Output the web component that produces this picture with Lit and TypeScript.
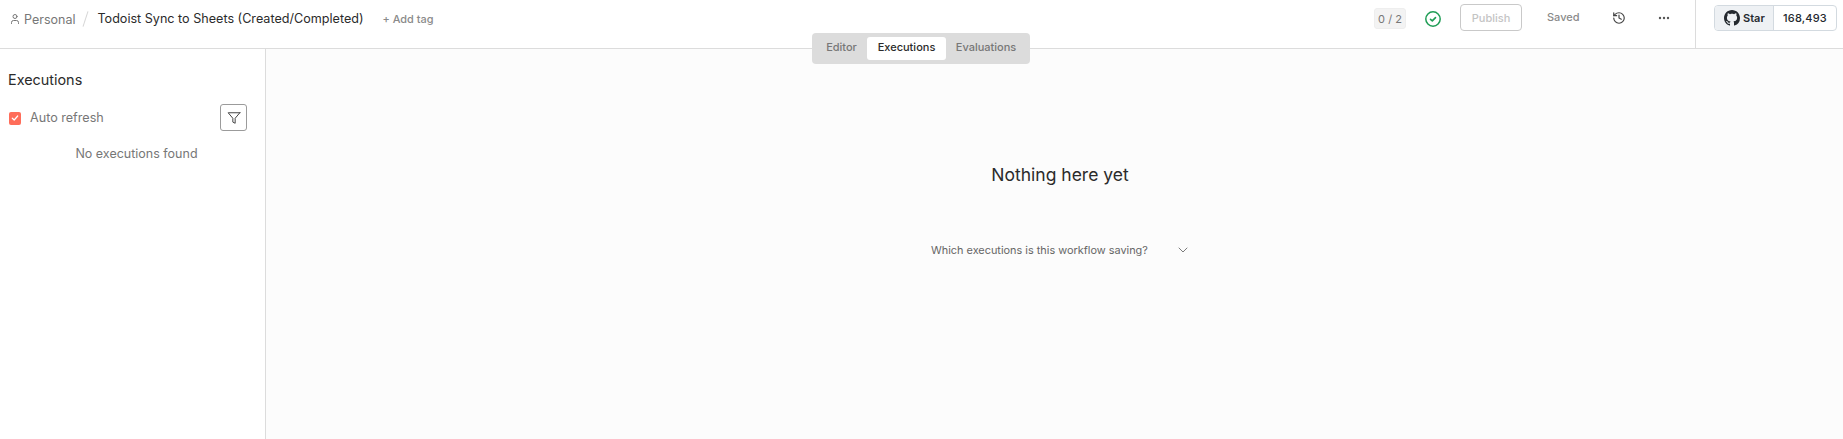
import { LitElement, html, css } from "lit";
import { customElement } from "lit/decorators.js";

@customElement("app-root")
export class AppRoot extends LitElement {
  static styles = css`
    :host { display: flex; flex-direction: column; width: 1843px; height: 439px; overflow: hidden; position: relative; background: #fff; font-family: Inter, "Liberation Sans", sans-serif; color: #222; }
    svg { display: block; flex: none; }
    .header { height: 48px; flex: none; border-bottom: 1px solid #dcdcdc; display: flex; background: #fff; }
    .crumbs { display: flex; align-items: center; height: 37px; flex: 1; padding-left: 9px; }
    .project { display: flex; align-items: center; gap: 3px; font-size: 12.5px; color: #777; margin-top: 1px; }
    .slash { width: 1px; height: 16px; background: #d6d6d6; transform: rotate(18deg); margin: 0 11px 0 10px; }
    .name { font-size: 12.6px; color: #2b2b2b; margin-top: -1px; }
    .addtag { font-size: 10.9px; font-weight: 500; color: #8a8a8a; margin-left: 19px; }
    .actions { display: flex; align-items: center; height: 36px; }
    .count { width: 32px; height: 21px; margin-top: 1px; border-radius: 3px; background: #f3f3f3; border: 1px solid #eee; box-sizing: border-box; display: flex; align-items: center; justify-content: center; font-size: 11px; color: #777; }
    .check { margin-left: 18px; margin-right: 18px; margin-top: 1px; }
    .publish { width: 62px; height: 27px; box-sizing: border-box; border: 1px solid #c9c9c9; border-radius: 4px; display: flex; align-items: center; justify-content: center; font-size: 11px; font-weight: 500; color: #c4c4c4; margin-top: -1px; }
    .saved { font-size: 11px; font-weight: 500; color: #8a8a8a; margin-left: 25px; margin-top: -2px; width: 32px; }
    .hist { margin-left: 33px; margin-top: -1px; }
    .dots { margin-left: 31px; margin-top: -1px; }
    .gh-area { width: 148px; height: 48px; flex: none; border-left: 1px solid #dcdcdc; box-sizing: border-box; padding: 5px 0 0 18px; margin-left: 24px; }
    .gh { display: flex; width: 123px; height: 26px; box-sizing: border-box; border: 1px solid #d3dae0; border-radius: 4px; font-size: 11px; font-weight: 600; color: #24292f; }
    .gh-star { width: 59px; display: flex; align-items: center; gap: 3px; padding-left: 9px; box-sizing: border-box; background: #eef1f4; border-right: 1px solid #d3dae0; border-radius: 3px 0 0 3px; }
    .gh-count { flex: 1; display: flex; align-items: center; justify-content: center; font-weight: 500; letter-spacing: .2px; }
    .tabs { position: absolute; left: 812px; top: 33px; height: 31px; width: 218px; box-sizing: border-box; background: #dcdcdc; border-radius: 4px; display: flex; align-items: center; padding: 0 4px; font-size: 11px; font-weight: 500; color: #777; z-index: 2; }
    .tab { height: 23px; display: flex; align-items: center; justify-content: center; border-radius: 3px; padding-bottom: 3px; box-sizing: border-box; }
    .tab.e1 { width: 51px; }
    .tab.e2 { width: 79px; background: #fff; color: #2b2b2b; }
    .tab.e3 { width: 80px; }
    .body { flex: 1; display: flex; min-height: 0; }
    .side { width: 266px; flex: none; box-sizing: border-box; border-right: 1px solid #dcdcdc; background: #fff; padding: 21px 18px 0 9px; }
    .side h2 { margin: 0; font-size: 14.4px; font-weight: 400; line-height: 20px; color: #2b2b2b; margin-left: -1px; }
    .refresh { display: flex; align-items: center; margin-top: 14px; height: 27px; }
    .cb { width: 12px; height: 13px; margin-top: 1px; border-radius: 2px; background: #ff6d5a; display: flex; align-items: center; justify-content: center; }
    .refresh span { margin-left: 9px; font-size: 12.6px; color: #777; flex: 1; }
    .filter { width: 27px; height: 27px; box-sizing: border-box; border: 1px solid #9b9b9b; border-radius: 3px; display: flex; align-items: center; justify-content: center; }
    .none { margin-top: 13px; margin-left: -1px; margin-right: -18px; text-align: center; font-size: 12.5px; line-height: 20px; color: #777; }
    .main { flex: 1; background: #fcfcfc; display: flex; flex-direction: column; align-items: center; padding-top: 112px; padding-left: 11px; }
    .main h1 { margin: 0; font-size: 17.5px; font-weight: 400; line-height: 28px; color: #2b2b2b; }
    .which { margin-top: 53px; display: flex; align-items: center; width: 258px; justify-content: space-between; font-size: 10.9px; color: #666; }
    .chev { margin-right: -2px; }
  `;

  render() {
    return html`
      <div class="header">
        <div class="crumbs">
          <div class="project">
            <svg width="12" height="12" viewBox="0 0 24 24" fill="none" stroke="#777" stroke-width="2" stroke-linecap="round" stroke-linejoin="round"><path d="M19 21v-2a4 4 0 0 0-4-4H9a4 4 0 0 0-4 4v2"/><circle cx="12" cy="7" r="4"/></svg>
            Personal
          </div>
          <div class="slash"></div>
          <div class="name">Todoist Sync to Sheets (Created/Completed)</div>
          <div class="addtag">+ Add tag</div>
        </div>
        <div class="actions">
          <div class="count">0 / 2</div>
          <svg class="check" width="18" height="18" viewBox="0 0 18 18" fill="none" stroke="#1f9d55" stroke-linecap="round" stroke-linejoin="round"><circle cx="9" cy="9" r="7.2" stroke-width="1.5"/><path d="M6.5 9.3 8.3 10.9 11.5 7.6" stroke-width="1.6"/></svg>
          <div class="publish">Publish</div>
          <div class="saved">Saved</div>
          <svg class="hist" width="14" height="14" viewBox="0 0 24 24" fill="none" stroke="#444" stroke-width="2" stroke-linecap="round" stroke-linejoin="round"><path d="M3 12a9 9 0 1 0 9-9 9.75 9.75 0 0 0-6.74 2.74L3 8"/><path d="M3 3v5h5"/><path d="M12 7v5l4 2"/></svg>
          <svg class="dots" width="14" height="14" viewBox="0 0 14 14" fill="#555"><circle cx="3" cy="7" r="1.2"/><circle cx="7" cy="7" r="1.2"/><circle cx="11" cy="7" r="1.2"/></svg>
        </div>
        <div class="gh-area">
          <div class="gh">
            <div class="gh-star">
              <svg width="16" height="16" viewBox="0 0 16 16" fill="#24292f"><path d="M8 0C3.58 0 0 3.58 0 8c0 3.54 2.29 6.53 5.47 7.59.4.07.55-.17.55-.38 0-.19-.01-.82-.01-1.49-2.01.37-2.53-.49-2.69-.94-.09-.23-.48-.94-.82-1.13-.28-.15-.68-.52-.01-.53.63-.01 1.08.58 1.23.82.72 1.21 1.87.87 2.33.66.07-.52.28-.87.51-1.07-1.78-.2-3.64-.89-3.64-3.95 0-.87.31-1.59.82-2.15-.08-.2-.36-1.02.08-2.12 0 0 .67-.21 2.2.82.64-.18 1.32-.27 2-.27s1.36.09 2 .27c1.53-1.04 2.2-.82 2.2-.82.44 1.1.16 1.92.08 2.12.51.56.82 1.27.82 2.15 0 3.07-1.87 3.75-3.65 3.95.29.25.54.73.54 1.48 0 1.07-.01 1.93-.01 2.2 0 .21.15.46.55.38A8.01 8.01 0 0 0 16 8c0-4.42-3.58-8-8-8Z"/></svg>
              Star
            </div>
            <div class="gh-count">168,493</div>
          </div>
        </div>
      </div>
      <div class="tabs">
        <div class="tab e1">Editor</div>
        <div class="tab e2">Executions</div>
        <div class="tab e3">Evaluations</div>
      </div>
      <div class="body">
        <div class="side">
          <h2>Executions</h2>
          <div class="refresh">
            <div class="cb"><svg width="8" height="8" viewBox="0 0 8 8" fill="none" stroke="#fff" stroke-width="1.2" stroke-linecap="round" stroke-linejoin="round"><path d="M1.3 4.2 3.2 6 6.7 2"/></svg></div>
            <span>Auto refresh</span>
            <div class="filter"><svg width="14" height="14" viewBox="0 0 24 24" fill="none" stroke="#444" stroke-width="1.7" stroke-linecap="round" stroke-linejoin="round"><polygon points="22 3 2 3 10 12.46 10 19 14 21 14 12.46 22 3"/></svg></div>
          </div>
          <div class="none">No executions found</div>
        </div>
        <div class="main">
          <h1>Nothing here yet</h1>
          <div class="which">
            <span>Which executions is this workflow saving?</span>
            <svg class="chev" width="16" height="16" viewBox="0 0 24 24" fill="none" stroke="#666" stroke-width="1.3" stroke-linecap="round" stroke-linejoin="round"><path d="m6 9 6 6 6-6"/></svg>
          </div>
        </div>
      </div>
    `;
  }
}
